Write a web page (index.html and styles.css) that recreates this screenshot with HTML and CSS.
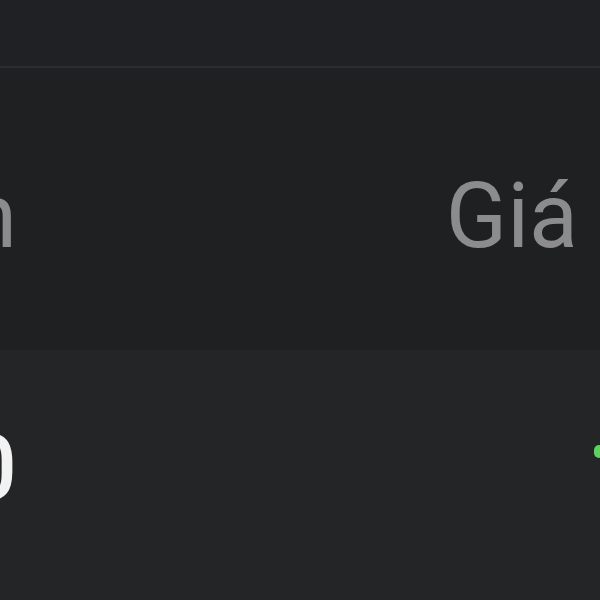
FILE: index.html
```html
<!DOCTYPE html>
<html lang="vi">
<head>
    <meta charset="UTF-8">
    <meta name="viewport" content="width=device-width, initial-scale=1.0">
    <title>Bảng giá</title>
    <link rel="stylesheet" href="styles.css">
</head>
<body>
<div class="topbar"></div>

<div class="table">
    <div class="thead">
        <div class="cell col-name">Tên</div>
        <div class="cell col-price">Giá</div>
        <div class="cell col-change"></div>
    </div>
    <div class="trow">
        <div class="cell col-name value">100</div>
        <div class="cell col-price"></div>
        <div class="cell col-change"><span class="up-mark"></span></div>
    </div>
</div>
</body>
</html>
```

FILE: styles.css
```css
body {
    margin: 0;
    background-color: #242527;
    font-family: Roboto, "Noto Sans", sans-serif;
    overflow: hidden;
    height: 600px;
}
.topbar {
    height: 66px;
    background-color: #202124;
    border-bottom: 2px solid #2c2d2f;
}
/* table is cropped: first column runs off the left edge */
.table {
    margin-left: -300px;
    width: 1000px;
}
.thead, .trow {
    display: flex;
    align-items: center;
}
.thead {
    height: 282px;
    background-color: #1f2022;
    color: #8c8c8c;
}
.trow {
    height: 250px;
    background-color: #242527;
    color: #f2f2f2;
}
.cell {
    font-size: 90px;
    line-height: 1;
    filter: blur(0.7px);
}
.col-name {
    width: 317px;
    text-align: right;
}
.col-price {
    width: 561px;
    text-align: right;
}
.thead .cell {
    padding-top: 15px;
}
.value {
    font-weight: 500;
    padding-bottom: 12px;
}
.col-change {
    padding-left: 16px;
}
.up-mark {
    display: block;
    width: 10px;
    height: 13px;
    border-radius: 5px;
    background-color: #5fcf5f;
    margin-top: -30px;
}
```
